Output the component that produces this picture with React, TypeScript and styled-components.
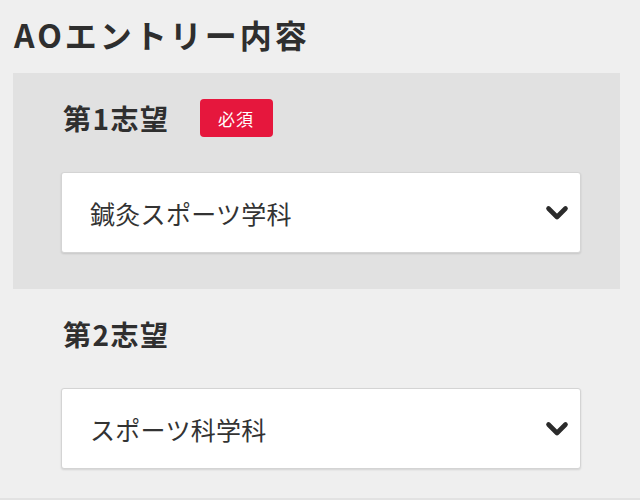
import styled, { createGlobalStyle } from 'styled-components'

const GlobalStyle = createGlobalStyle`
    html, body {
        margin: 0;
        padding: 0;
        background: #efefef;
        font-family: "Noto Sans CJK JP", "Noto Sans", sans-serif;
        color: #333;
    }
`

const Page = styled.div`
    width: 640px;
    height: 500px;
    box-sizing: border-box;
    border-bottom: 2px solid #e2e2e2;
    overflow: hidden;
`

const Title = styled.h2`
    margin: 0;
    padding: 14px 0 0 14px;
    font-size: 32px;
    line-height: 40px;
    font-weight: 700;
    letter-spacing: 3px;
    color: #2e2e2e;
`

const Section = styled.section<{ $highlight?: boolean }>`
    margin: ${(props) => props.$highlight ? '19px' : '0'} 20px 0 13px;
    padding: 26px 39px 36px 48px;
    background: ${(props) => props.$highlight ? '#e1e1e1' : 'transparent'};
    display: flex;
    flex-direction: column;
    gap: 35px;
`

const LabelRow = styled.div`
    display: flex;
    align-items: center;
    gap: 30px;
    height: 38px;
`

const Label = styled.h3`
    margin: 0;
    padding-left: 2px;
    font-size: 28px;
    line-height: 38px;
    font-weight: 700;
    letter-spacing: 1.5px;
    color: #2f2f2f;
`

const Badge = styled.span`
    display: inline-flex;
    align-items: center;
    justify-content: center;
    width: 73px;
    height: 38px;
    border-radius: 4px;
    background: #e6173d;
    color: #fff;
    font-size: 17px;
    letter-spacing: 1px;
`

const SelectBox = styled.div`
    height: 81px;
    box-sizing: border-box;
    background: #fff;
    border: 1px solid #d4d4d4;
    border-radius: 3px;
    box-shadow: 0 1px 2px rgba(0, 0, 0, 0.12);
    display: flex;
    align-items: center;
    justify-content: space-between;
    padding: 0 11px 0 28px;
    cursor: pointer;
`

const SelectText = styled.span`
    font-size: 25px;
    letter-spacing: 0.3px;
    color: #333;
`

const Chevron = () => (
    <svg width="24" height="16" viewBox="0 0 24 16">
        <polyline points="3.5,3.5 12,12 20.5,3.5" fill="none" stroke="#2b2b2b" strokeWidth="4.6" strokeLinecap="round" strokeLinejoin="round" />
    </svg>
)

export default function App() {
    return (
        <>
            <GlobalStyle />
            <Page>
                <Title>AOエントリー内容</Title>
                <Section $highlight>
                    <LabelRow>
                        <Label>第1志望</Label>
                        <Badge>必須</Badge>
                    </LabelRow>
                    <SelectBox>
                        <SelectText>鍼灸スポーツ学科</SelectText>
                        <Chevron />
                    </SelectBox>
                </Section>
                <Section>
                    <LabelRow>
                        <Label>第2志望</Label>
                    </LabelRow>
                    <SelectBox>
                        <SelectText>スポーツ科学科</SelectText>
                        <Chevron />
                    </SelectBox>
                </Section>
            </Page>
        </>
    )
}
